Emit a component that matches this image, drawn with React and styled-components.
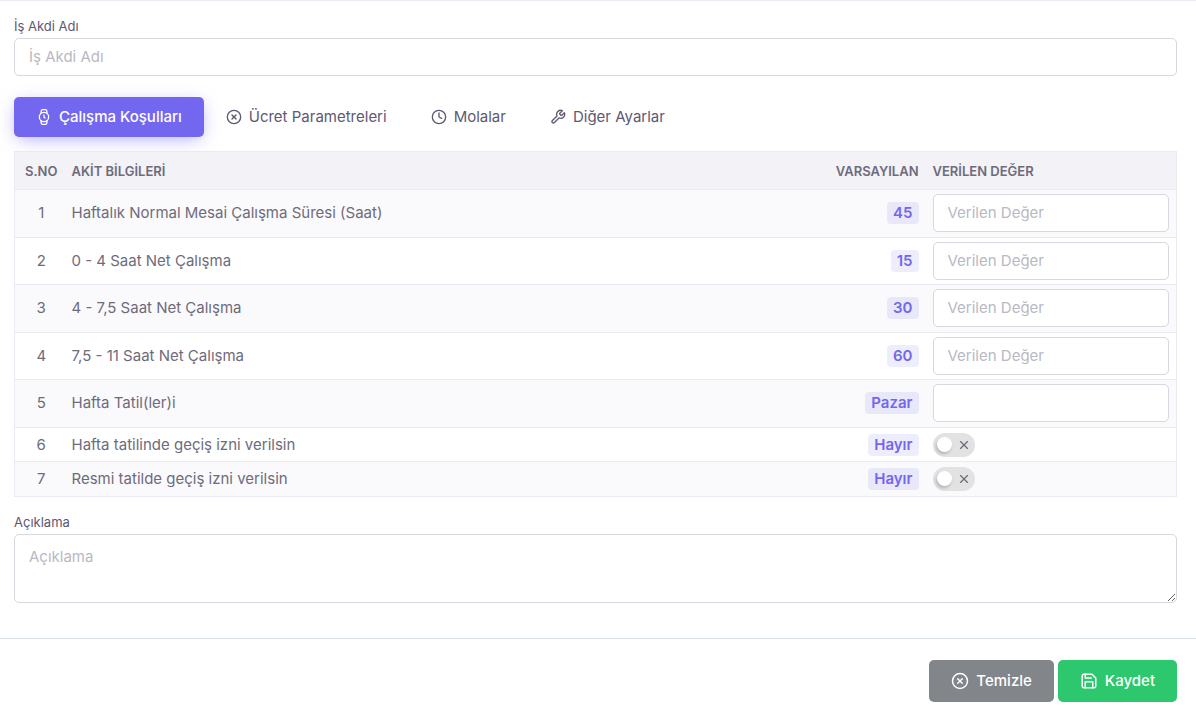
import React from 'react';
import styled, { createGlobalStyle } from 'styled-components';
import { FiClock, FiSave, FiTool, FiWatch, FiX, FiXCircle } from 'react-icons/fi';

const GlobalStyle = createGlobalStyle`
  *, *::before, *::after {
    box-sizing: border-box;
  }

  body {
    margin: 0;
    background: #fff;
    color: #6e6b7b;
    font-family: Inter, 'Open Sans', sans-serif;
    font-size: 15px;
    line-height: 20px;
  }
`;

const Body = styled.main`
  display: flex;
  flex-direction: column;
  padding: 16px 19px 35px 14px;
  border-top: 1px solid #ebe9f1;
`;

const Field = styled.div`
  display: flex;
  flex-direction: column;
  gap: 3px;
`;

const Label = styled.label`
  color: #5e5873;
  font-size: 13px;
  line-height: 18px;
`;

const Input = styled.input`
  display: block;
  width: 100%;
  height: 38px;
  padding: 6px 14px 8px;
  border: 1px solid #d8d6de;
  border-radius: 5px;
  background: #fff;
  color: #6e6b7b;
  font: inherit;

  &::placeholder {
    color: #b9b9c3;
    opacity: 1;
  }
`;

const TextArea = styled(Input).attrs({ as: 'textarea' })`
  height: 69px;
  padding: 12px 14px;
  resize: vertical;
`;

const Tabs = styled.div`
  display: flex;
  margin: 21px 0 14px;
`;

const Tab = styled.button`
  display: flex;
  align-items: center;
  gap: 7px;
  height: 40px;
  padding: 0 22px;
  border: 0;
  border-radius: 5px;
  background: ${props => props.$active ? '#7367f0' : 'transparent'};
  box-shadow: ${props => props.$active ? '0 4px 18px -4px rgba(115, 103, 240, 0.65)' : 'none'};
  color: ${props => props.$active ? '#fff' : '#5e5873'};
  font: inherit;
  font-weight: ${props => props.$active ? 500 : 400};
  cursor: pointer;
`;

const Table = styled.table`
  width: 100%;
  margin-bottom: 16px;
  border: 1px solid #ebe9f1;
  border-collapse: collapse;

  tbody tr:nth-child(odd) {
    background: #fafafc;
  }

  tbody tr:nth-child(odd) td {
    padding-bottom: 5px;
  }
`;

const HeadCell = styled.th`
  height: 38px;
  padding: 0 7px;
  background: #f3f2f7;
  border-bottom: 1px solid #ebe9f1;
  font-size: 13px;
  font-weight: 600;
  text-align: ${props => props.$align || 'left'};
  white-space: nowrap;

  &:first-child {
    padding-left: 10px;
  }
`;

const Cell = styled.td`
  padding: ${props => props.$compact ? '5px 7px 4px' : '4px 7px'};
  border-bottom: 1px solid #ebe9f1;
  text-align: ${props => props.$align || 'left'};

  &:first-child {
    padding-left: 10px;
  }
`;

const Badge = styled.span`
  display: inline-block;
  padding: 0 6px;
  border-radius: 4px;
  background: rgba(115, 103, 240, 0.12);
  color: #7367f0;
  font-weight: 600;
  line-height: 22px;
`;

const Switch = styled.label`
  position: relative;
  display: flex;
  align-items: center;
  justify-content: flex-end;
  width: 42px;
  height: 24px;
  padding-right: 4px;
  border-radius: 12px;
  background: #e2e2e2;
  cursor: pointer;

  input {
    position: absolute;
    inset: 0;
    width: 100%;
    height: 100%;
    margin: 0;
    opacity: 0;
  }

  &::before {
    content: '';
    position: absolute;
    top: 4px;
    left: 4px;
    width: 15px;
    height: 15px;
    border-radius: 50%;
    background: #fff;
    box-shadow: -1px 2px 3px rgba(34, 41, 47, 0.25);
  }
`;

const Footer = styled.footer`
  display: flex;
  justify-content: flex-end;
  gap: 4px;
  padding: 21px 19px 16px;
  border-top: 1px solid #dae1e7;
`;

const Button = styled.button`
  display: flex;
  align-items: center;
  gap: 7px;
  height: 42px;
  padding: 0 22px;
  border: 0;
  border-radius: 5px;
  background: ${props => props.$color};
  color: #fff;
  font: inherit;
  font-weight: 500;
  cursor: pointer;
`;

const tabs = [
  { title: 'Çalışma Koşulları', icon: FiWatch },
  { title: 'Ücret Parametreleri', icon: FiXCircle },
  { title: 'Molalar', icon: FiClock },
  { title: 'Diğer Ayarlar', icon: FiTool },
];

const rows = [
  { title: 'Haftalık Normal Mesai Çalışma Süresi (Saat)', value: '45', placeholder: 'Verilen Değer' },
  { title: '0 - 4 Saat Net Çalışma', value: '15', placeholder: 'Verilen Değer' },
  { title: '4 - 7,5 Saat Net Çalışma', value: '30', placeholder: 'Verilen Değer' },
  { title: '7,5 - 11 Saat Net Çalışma', value: '60', placeholder: 'Verilen Değer' },
  { title: 'Hafta Tatil(ler)i', value: 'Pazar' },
  { title: 'Hafta tatilinde geçiş izni verilsin', value: 'Hayır', toggle: true },
  { title: 'Resmi tatilde geçiş izni verilsin', value: 'Hayır', toggle: true },
];

const App = () => {
  return (
    <>
      <GlobalStyle />
      <Body>
        <Field>
          <Label htmlFor="contract-name">İş Akdi Adı</Label>
          <Input id="contract-name" placeholder="İş Akdi Adı" />
        </Field>

        <Tabs role="tablist">
          {tabs.map(({ title, icon: Icon }, i) => (
            <Tab key={title} type="button" role="tab" aria-selected={i === 0} $active={i === 0}>
              <Icon size={16} />
              {title}
            </Tab>
          ))}
        </Tabs>

        <Table>
          <colgroup>
            <col width="50" />
            <col />
            <col width="98" />
            <col width="251" />
          </colgroup>
          <thead>
            <tr>
              <HeadCell $align="center">S.NO</HeadCell>
              <HeadCell>AKİT BİLGİLERİ</HeadCell>
              <HeadCell $align="right">VARSAYILAN</HeadCell>
              <HeadCell>VERİLEN DEĞER</HeadCell>
            </tr>
          </thead>
          <tbody>
            {rows.map((row, i) => (
              <tr key={row.title}>
                <Cell $align="center">{i + 1}</Cell>
                <Cell>{row.title}</Cell>
                <Cell $align="right">
                  <Badge>{row.value}</Badge>
                </Cell>
                <Cell $compact={row.toggle}>
                  {row.toggle ? (
                    <Switch>
                      <input type="checkbox" aria-label={row.title} />
                      <FiX size={14} />
                    </Switch>
                  ) : (
                    <Input aria-label={row.title} placeholder={row.placeholder} />
                  )}
                </Cell>
              </tr>
            ))}
          </tbody>
        </Table>

        <Field>
          <Label htmlFor="description">Açıklama</Label>
          <TextArea id="description" placeholder="Açıklama" />
        </Field>
      </Body>

      <Footer>
        <Button type="button" $color="#82868b">
          <FiXCircle size={18} />
          Temizle
        </Button>
        <Button type="button" $color="#2dc76d">
          <FiSave size={18} />
          Kaydet
        </Button>
      </Footer>
    </>
  );
};

export default App;
